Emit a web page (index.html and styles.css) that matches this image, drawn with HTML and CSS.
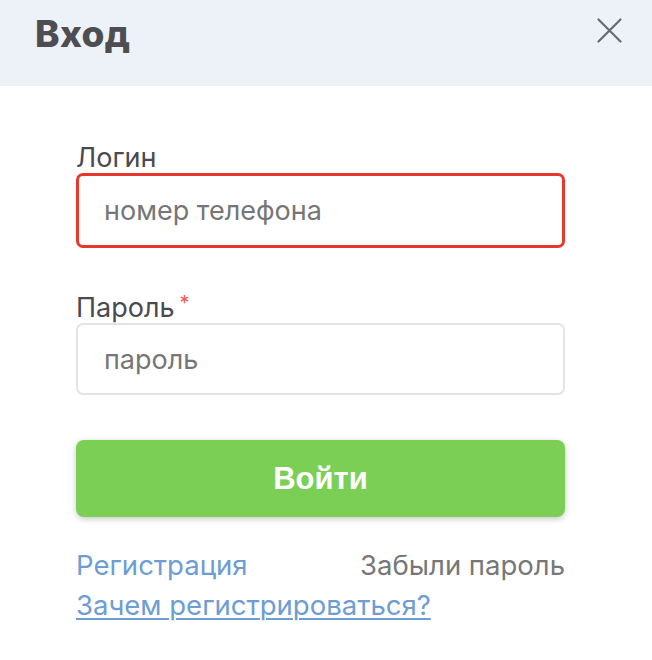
FILE: index.html
```html
<!DOCTYPE html>
<html lang="ru">
<head>
<meta charset="utf-8">
<link rel="stylesheet" href="styles.css">
</head>
<body>
<div class="modal">
  <header class="modal-head">
    <h1 class="title">Вход</h1>
    <button class="close" aria-label="Закрыть">
      <svg width="25" height="25" viewBox="0 0 25 25"><path d="M1.5 1.5 L23.5 23.5 M23.5 1.5 L1.5 23.5" stroke="#6b6b6b" stroke-width="2.2" stroke-linecap="round" fill="none"/></svg>
    </button>
  </header>
  <form class="form">
    <label class="field">
      <span class="label">Логин</span>
      <input class="input input-error" type="text" placeholder="номер телефона">
    </label>
    <label class="field field-pass">
      <span class="label">Пароль<span class="req">*</span></span>
      <input class="input" type="password" placeholder="пароль">
    </label>
    <button type="button" class="submit">Войти</button>
    <div class="links">
      <a class="link" href="#">Регистрация</a>
      <a class="link-muted" href="#">Забыли пароль</a>
    </div>
    <a class="link link-under" href="#">Зачем регистрироваться?</a>
  </form>
</div>
</body>
</html>
```
FILE: styles.css
```css
* { box-sizing: border-box; }
html, body { margin: 0; padding: 0; background: #fff; }
body { font-family: Inter, "Noto Sans", sans-serif; color: #4a4a50; }

.modal { width: 652px; }

.modal-head {
  height: 86px;
  background: #edf1f8;
  display: flex;
  align-items: flex-start;
  justify-content: space-between;
  padding: 12px 30px 0 35px;
}
.title {
  margin: 0;
  font-family: Inter, "Noto Sans", sans-serif;
  font-weight: 800;
  font-size: 37px;
  line-height: 44px;
  letter-spacing: 0.3px;
  color: #4d4d52;
}
.close {
  border: 0;
  background: none;
  padding: 0;
  margin-top: 6px;
  width: 25px;
  height: 25px;
  display: flex;
}

.form {
  padding: 57px 87px 0 76px;
  display: flex;
  flex-direction: column;
}
.field { display: flex; flex-direction: column; }
.field-pass { margin-top: 45px; }
.label {
  font-size: 27px;
  line-height: 30px;
  color: #4a4a50;
}
.req {
  color: #ef5a55;
  font-size: 20px;
  line-height: 20px;
  vertical-align: top;
  margin-left: 5px;
}

.input {
  height: 72px;
  border: 2px solid #e4e4e4;
  border-radius: 7px;
  padding: 0 26px;
  font-family: Inter, "Noto Sans", sans-serif;
  font-size: 27px;
  color: #333;
  outline: none;
}
.input::placeholder { color: #767676; }
.input-error { border: 3px solid #e8372b; height: 75px; padding-left: 25px; }

.submit {
  margin-top: 45px;
  height: 77px;
  border: 0;
  border-radius: 8px;
  background: #7ccf55;
  color: #fff;
  font-family: "Liberation Sans", Arial, sans-serif;
  font-weight: 700;
  font-size: 31px;
  box-shadow: 0 2px 6px rgba(0,0,0,0.22);
}

.links {
  margin-top: 30px;
  display: flex;
  justify-content: space-between;
}
.link, .link-muted {
  font-size: 27.5px;
  line-height: 36px;
  text-decoration: none;
}
.link { color: #6d9dd3; }
.link-muted { color: #777; }
.link-under {
  text-decoration: underline;
  text-decoration-thickness: 2px;
  text-underline-offset: 3px;
  margin-top: 4px;
  align-self: flex-start;
}
```
